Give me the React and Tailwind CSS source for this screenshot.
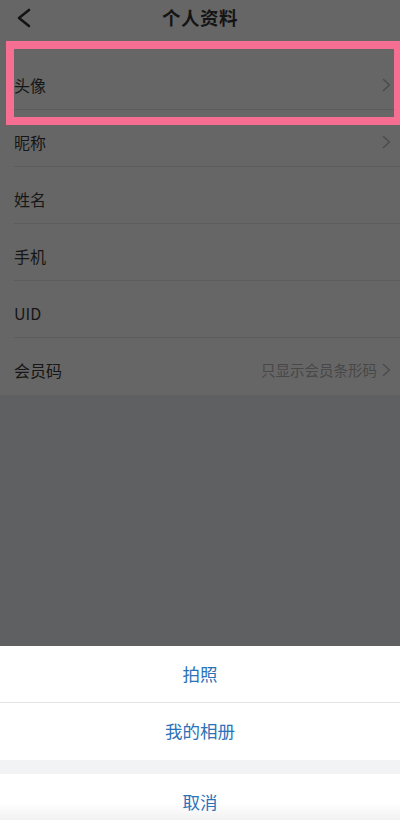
import React from 'react'

const rows = [
  { label: '头像', arrow: true },
  { label: '昵称', arrow: true },
  { label: '姓名' },
  { label: '手机' },
  { label: 'UID' },
  { label: '会员码', value: '只显示会员条形码', arrow: true },
]

function Chevron() {
  return (
    <svg width="9" height="14" viewBox="0 0 9 14" className="shrink-0">
      <polyline points="1.5,1.5 7.5,7 1.5,12.5" fill="none" stroke="#4b4b4b" strokeWidth="1.4" strokeLinecap="round" strokeLinejoin="round" />
    </svg>
  )
}

export default function App() {
  return (
    <div className="relative w-[400px] h-[820px] overflow-hidden bg-[#5f6062] font-['Noto_Sans_CJK_SC','Noto_Sans',sans-serif]">
      {/* 顶部 + 列表 */}
      <div className="bg-[#666666]">
        <div className="relative h-[36px] flex items-center justify-center">
          <svg width="16" height="20" viewBox="0 0 16 20" className="absolute left-[16px] top-[8px]">
            <polyline points="13,2 3,10 13,18" fill="none" stroke="#141414" strokeWidth="2.6" strokeLinecap="round" strokeLinejoin="round" />
          </svg>
          <h1 className="text-[18.5px] font-bold text-[#141414] tracking-[0.5px]">个人资料</h1>
        </div>
        <div className="h-[17px]" />
        <ul>
          {rows.map((r, i) => (
            <li key={r.label} className="ml-[14px]">
              <div className={`h-[57px] pt-[7px] pr-[9px] flex items-center justify-between ${i < rows.length - 1 ? 'border-b border-[#5c5c5c]' : ''}`}>
                <span className="text-[16px] text-[#161616]">{r.label}</span>
                <div className="flex items-center gap-[5px]">
                  {r.value && <span className="text-[14.5px] text-[#484848]">{r.value}</span>}
                  {r.arrow && <Chevron />}
                </div>
              </div>
            </li>
          ))}
        </ul>
      </div>

      {/* 高亮框 */}
      <div className="absolute left-[6px] top-[41px] w-[396px] h-[84px] border-[8px] border-[#f66f92]" />

      {/* 底部操作面板 */}
      <div className="absolute left-0 right-0 top-[646px] bg-white">
        <button className="w-full h-[57px] flex items-center justify-center border-b border-[#e3e3e3] text-[17.5px] text-[#2c72b6]">拍照</button>
        <button className="w-full h-[57px] flex items-center justify-center text-[17.5px] text-[#2c72b6]">我的相册</button>
        <div className="h-[14px] bg-[#f2f3f5]" />
        <button className="w-full h-[57px] flex items-center justify-center text-[17.5px] text-[#2c72b6] bg-gradient-to-b from-white via-white to-[#e9e9e9]">取消</button>
      </div>
    </div>
  )
}
